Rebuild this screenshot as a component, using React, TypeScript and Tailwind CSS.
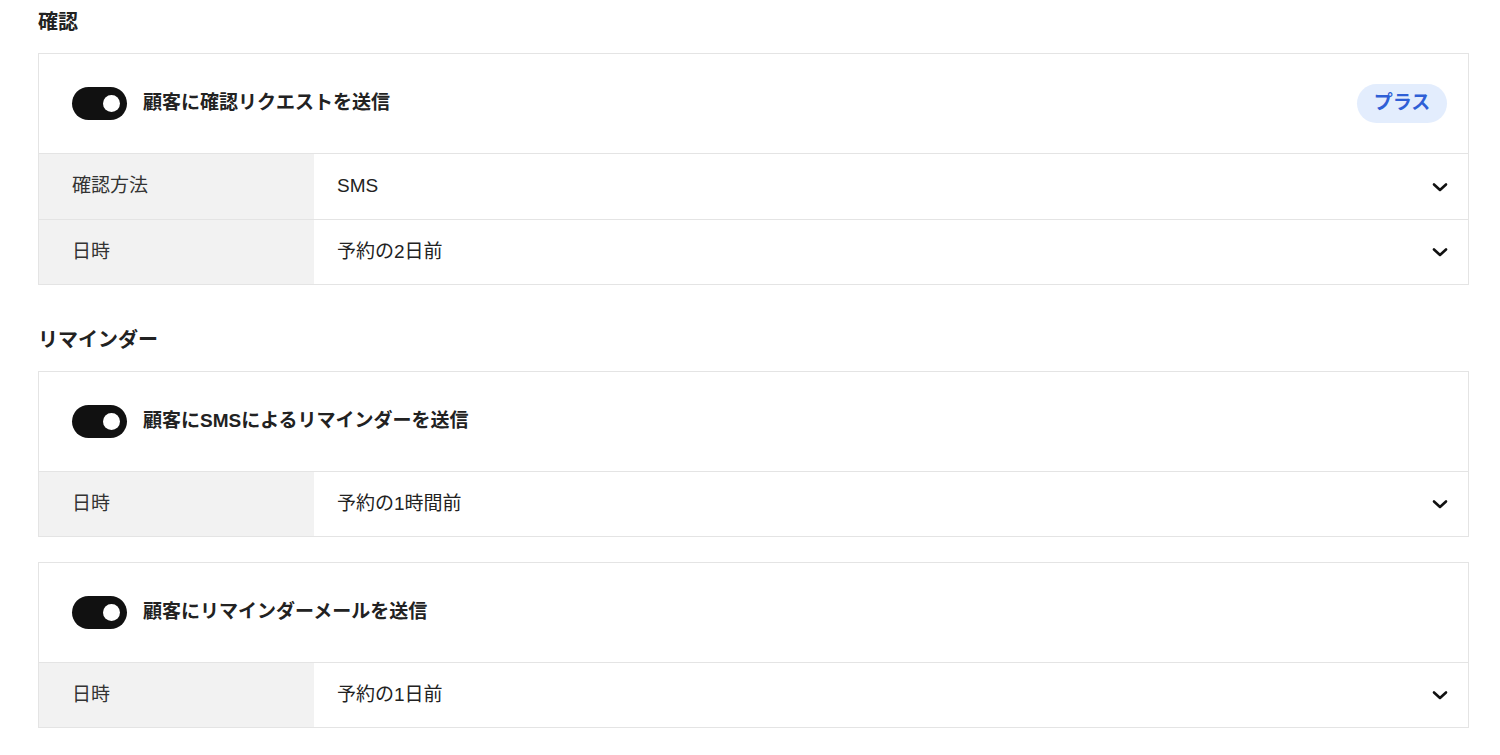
const font = "font-['Helvetica_Neue','Liberation_Sans','Noto_Sans_CJK_JP',sans-serif]";

type Row = { label: string; value: string };

const sections = [
  {
    title: "確認",
    cards: [
      {
        heading: "顧客に確認リクエストを送信",
        badge: "プラス",
        rows: [
          { label: "確認方法", value: "SMS" },
          { label: "日時", value: "予約の2日前" },
        ],
      },
    ],
  },
  {
    title: "リマインダー",
    cards: [
      {
        heading: "顧客にSMSによるリマインダーを送信",
        rows: [{ label: "日時", value: "予約の1時間前" }],
      },
      {
        heading: "顧客にリマインダーメールを送信",
        rows: [{ label: "日時", value: "予約の1日前" }],
      },
    ],
  },
];

function Toggle() {
  return (
    <div className="flex h-[33px] w-[55px] shrink-0 items-center justify-end rounded-full bg-[#111111] pr-[7px]">
      <div className="h-[17px] w-[17px] rounded-full bg-white" />
    </div>
  );
}

function Chevron() {
  return (
    <svg width="16" height="10" viewBox="0 0 16 10" fill="none">
      <path d="M2 2.5 L8 8 L14 2.5" stroke="#111" strokeWidth="2.6" strokeLinecap="round" strokeLinejoin="round" />
    </svg>
  );
}

function SettingRow({ row, last }: { row: Row; last: boolean }) {
  return (
    <div className={`flex border-t border-[#e4e4e4] ${last ? "h-[65px]" : "h-[66px]"}`}>
      <div className="flex w-[275px] shrink-0 items-center bg-[#f2f2f2] pl-[33px] text-[19px] text-[#333]">
        {row.label}
      </div>
      <div className="flex flex-1 items-center justify-between pl-[23px] pr-[20px] text-[19px] text-[#222]">
        <span>{row.value}</span>
        <Chevron />
      </div>
    </div>
  );
}

export default function App() {
  return (
    <div className={`${font} bg-white pl-[38px] pr-[31px] pt-[10px] pb-[16px] antialiased`}>
      {sections.map((section, i) => (
        <section key={i} className={i > 0 ? "mt-[43px]" : ""}>
          <h2 className="mb-[19px] h-[24px] text-[20px] font-bold leading-[24px] text-[#222]">{section.title}</h2>
          <div className="flex flex-col gap-[25px]">
            {section.cards.map((card, j) => (
              <div key={j} className="border border-[#e4e4e4] bg-white">
                <div className="flex h-[99px] items-center justify-between pl-[33px] pr-[21px]">
                  <div className="flex items-center gap-[16px]">
                    <Toggle />
                    <span className="text-[19px] font-bold text-[#222]">{card.heading}</span>
                  </div>
                  {card.badge && (
                    <span className="flex h-[39px] w-[90px] items-center justify-center rounded-full bg-[#e3edfd] text-[19px] font-bold text-[#2f5fd6]">
                      {card.badge}
                    </span>
                  )}
                </div>
                {card.rows.map((row, k) => (
                  <SettingRow key={k} row={row} last={k === card.rows.length - 1} />
                ))}
              </div>
            ))}
          </div>
        </section>
      ))}
    </div>
  );
}
